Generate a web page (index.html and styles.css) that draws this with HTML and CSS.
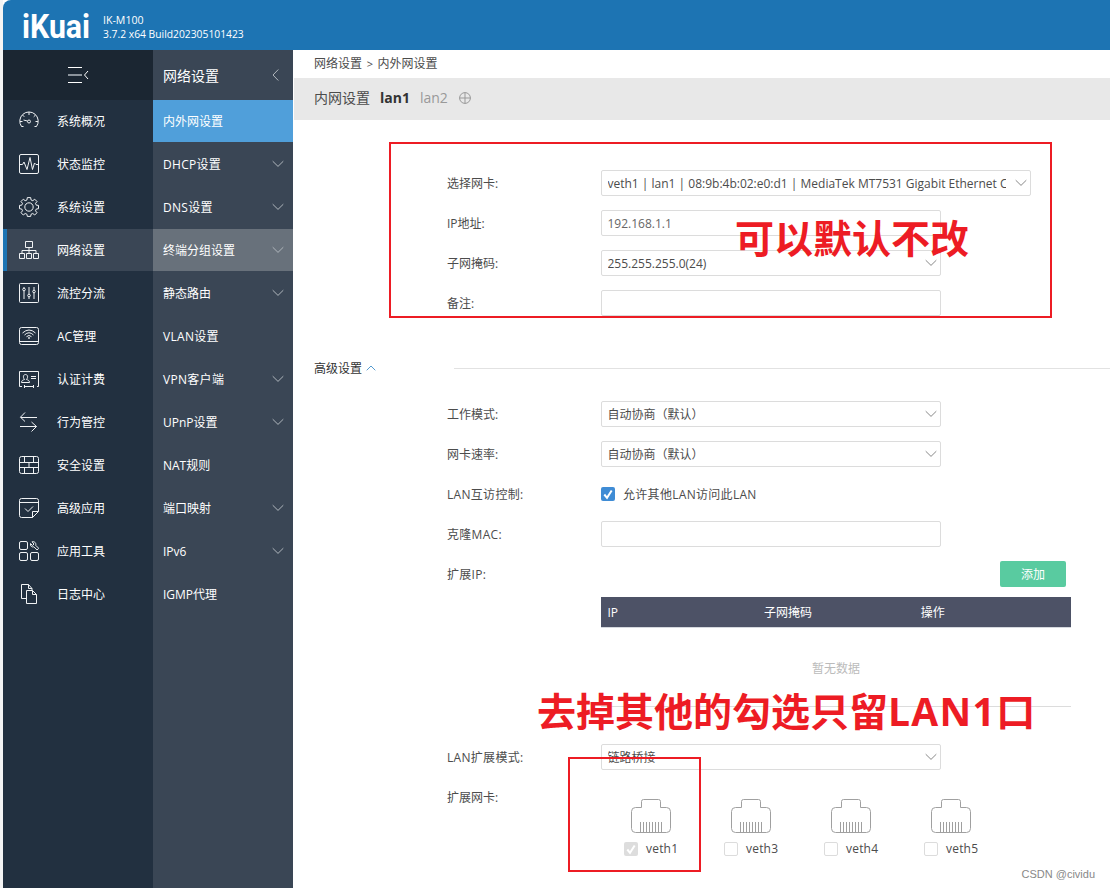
FILE: index.html
```html
<!DOCTYPE html>
<html lang="zh-CN">

<head>
    <meta charset="UTF-8">
    <meta name="viewport" content="width=device-width, initial-scale=1.0">
    <title>iKuai</title>
    <link rel="stylesheet" href="styles.css">
</head>

<body>
    <svg class="defs">
        <symbol id="down" viewBox="0 0 12 8">
            <path d="M.7 1.2 6 6.4l5.300-5.200" />
        </symbol>
        <symbol id="port" viewBox="0 0 40 34">
            <path d="M.5 12.500a4 4 0 0 1 4-4h6V2.500a2 2 0 0 1 2-2h15a2 2 0 0 1 2 2v6h6a4 4 0 0 1 4 4v17a4 4 0 0 1-4 4h-31a4 4 0 0 1-4-4z" />
            <path d="M9.500 23v10M12.500 23v10M15.500 23v10M18.500 23v10M21.500 23v10M24.500 23v10M27.500 23v10M30.500 23v10" />
        </symbol>
    </svg>

    <div class="app">
        <header class="header">
            <svg class="logo" width="70" height="28" viewBox="0 0 70 28">
                <text x="0" y="26" textLength="68" lengthAdjust="spacingAndGlyphs">iKuai</text>
            </svg>
            <div class="version">IK-M100<br><span>3.7.2 x64 Build202305101423</span></div>
        </header>

        <div class="main">
            <nav class="menu">
                <div class="menu-toggle">
                    <svg width="22" height="16" viewBox="0 0 22 16">
                        <path d="M0 .5h14M0 15.500h14" />
                        <path class="dim" d="M0 8h14" />
                        <path d="M20 4l-3.500 4 3.500 4" />
                    </svg>
                </div>
                <a class="menu-item">
                    <svg viewBox="0 0 20 20"><path d="M4.500 15.500H2.500A9.200 9.200 0 1 1 17.500 15.500H15.500M10 1v3M3.500 4l1.800 1.800M16.500 4l-1.800 1.800M1 10.500h2.500M16.500 10.500H19M4.500 9l4 1" /><circle cx="10" cy="10.500" r="1.500" /></svg>
                    系统概况
                </a>
                <a class="menu-item">
                    <svg viewBox="0 0 20 20"><rect x=".5" y=".5" width="19" height="19" rx="1.500" /><path d="M1 10.500h2.500l1.500-2.500 3 7.500 3-12 2.500 12 2-6.500 1.500 1.500H19" /></svg>
                    状态监控
                </a>
                <a class="menu-item">
                    <svg viewBox="0 0 20 20"><circle cx="10" cy="10" r="4.200" /><path d="M8.300.6h3.400l.3 2.300 1.800.8 1.900-1.500 2.300 2.300-1.500 1.900.8 1.800 2.200.2v3.300l-2.200.3-.8 1.800 1.500 1.900-2.300 2.300-1.900-1.500-1.800.8-.3 2.100H8.300L8 17.300l-1.800-.8L4.300 18 2 15.700l1.500-1.900-.8-1.800-2.200-.3V8.400l2.200-.2.8-1.800L2 4.500l2.300-2.300 1.900 1.500L8 2.900z" /></svg>
                    系统设置
                </a>
                <a class="menu-item active">
                    <svg viewBox="0 0 20 20"><path d="M6.500 1.500h7v6h-7zM.5 13.500h5v5h-5zM7.500 13.500h5v5h-5zM14.500 13.500h5v5h-5zM10 7.500v6M3 13.500v-3h14v3" /></svg>
                    网络设置
                </a>
                <a class="menu-item">
                    <svg viewBox="0 0 20 20"><rect x=".5" y=".5" width="19" height="19" rx="1" /><path d="M5 4v1M5 8v8M10 4v7M10 14v2M15 4v3M15 10v6" /><circle cx="5" cy="6.500" r="1.300" /><circle cx="10" cy="12.500" r="1.300" /><circle cx="15" cy="8.500" r="1.300" /></svg>
                    流控分流
                </a>
                <a class="menu-item">
                    <svg viewBox="0 0 20 20"><rect x=".5" y="1.500" width="19" height="17" rx="2" /><path d="M.5 15.500h19M3.500 7q6.500-6 13 0M5.500 9q4.500-4.500 9 0M7.500 10.700q2.500-2.500 5 0" /><circle cx="10" cy="12" r=".6" /></svg>
                    AC管理
                </a>
                <a class="menu-item">
                    <svg viewBox="0 0 20 20"><path d="M3 17.500H.5v-15h19v15H18M5.500 16v3M5.500 17.500H14M14.500 16v3M12 7.500h5M12 9.500h5M2.500 13.500c0-2 1.500-2.500 3-3-2-2.500-1-5 1-5s3 2.500 1 5c1.500.5 3 1 3 3z" /></svg>
                    认证计费
                </a>
                <a class="menu-item">
                    <svg viewBox="0 0 20 20"><path d="M6 .5 1.500 5.200 6 9.500M1.500 5.500H18M1 14.500h16.500M12.500 10l5 4.500-5 5" /></svg>
                    行为管控
                </a>
                <a class="menu-item">
                    <svg viewBox="0 0 20 20"><rect x=".5" y="1.500" width="19" height="17" rx="2" /><path d="M.5 7.500h19M.5 12.500h19M5.500 1.500v6M14.500 1.500v6M10 7.500v5M5.500 12.500v6M14.500 12.500v6" /></svg>
                    安全设置
                </a>
                <a class="menu-item">
                    <svg viewBox="0 0 20 20"><path d="M13.500 19.500h-11a2 2 0 0 1-2-2v-15a2 2 0 0 1 2-2h15a2 2 0 0 1 2 2v11zM.5 4.500h19M13.500 19.500v-6h6M6 10.500l3 3 5-5" /></svg>
                    高级应用
                </a>
                <a class="menu-item">
                    <svg viewBox="0 0 20 20"><rect x=".5" y=".5" width="8" height="8" rx="1.500" /><rect x=".5" y="11.500" width="8" height="8" rx="1.500" /><rect x="11.500" y="11.500" width="8" height="8" rx="1.500" /><path d="M13 .8c2-.8 4.500 1 3.700 3.500l3 3-1.600 1.700-3.200-3.200c-2 .8-4-1-3.400-3.300l2 2 1.500-1.500z" /></svg>
                    应用工具
                </a>
                <a class="menu-item">
                    <svg viewBox="0 0 20 20"><path d="M7 14.500H2.500V.5h7l3.500 4v2M9.500.5v4H13M7.500 6.500h6l4 4v9h-10zM13.500 6.500v4h4" /></svg>
                    日志中心
                </a>
            </nav>

            <nav class="submenu">
                <div class="submenu-title">网络设置
                    <svg width="7" height="12" viewBox="0 0 7 12"><path d="M6.300.5 1 6l5.300 5.500" /></svg>
                </div>
                <a class="sub-item current">内外网设置</a>
                <a class="sub-item mixed">DHCP设置<svg><use href="#down" /></svg></a>
                <a class="sub-item mixed">DNS设置<svg><use href="#down" /></svg></a>
                <a class="sub-item hover">终端分组设置<svg><use href="#down" /></svg></a>
                <a class="sub-item">静态路由<svg><use href="#down" /></svg></a>
                <a class="sub-item mixed">VLAN设置</a>
                <a class="sub-item mixed">VPN客户端<svg><use href="#down" /></svg></a>
                <a class="sub-item">UPnP设置<svg><use href="#down" /></svg></a>
                <a class="sub-item">NAT规则</a>
                <a class="sub-item">端口映射<svg><use href="#down" /></svg></a>
                <a class="sub-item">IPv6<svg><use href="#down" /></svg></a>
                <a class="sub-item">IGMP代理</a>
            </nav>

            <div class="content">
                <div class="crumb">网络设置 <i>&gt;</i> 内外网设置</div>
                <div class="tabs">
                    <span>内网设置</span>
                    <b>lan1</b>
                    <span class="tab-off">lan2</span>
                    <svg width="12" height="12" viewBox="0 0 12 12"><circle cx="6" cy="6" r="5.400" /><path d="M.5 6h11M6 .5v11" /></svg>
                </div>

                <div class="form form-basic">
                    <div class="row">
                        <label>选择网卡:</label>
                        <div class="field select wide"><span>veth1 | lan1 | 08:9b:4b:02:e0:d1 | MediaTek MT7531 Gigabit Ethernet Controller</span><svg><use href="#down" /></svg></div>
                    </div>
                    <div class="row">
                        <label>IP地址:</label>
                        <div class="field muted"><span>192.168.1.1</span></div>
                    </div>
                    <div class="row">
                        <label>子网掩码:</label>
                        <div class="field select"><span>255.255.255.0(24)</span><svg><use href="#down" /></svg></div>
                    </div>
                    <div class="row">
                        <label>备注:</label>
                        <div class="field"></div>
                    </div>
                </div>

                <div class="section">
                    <span>高级设置</span>
                    <svg width="10" height="6" viewBox="0 0 10 6"><path d="M.7 5.300 5 1l4.300 4.300" /></svg>
                    <hr>
                </div>

                <div class="form">
                    <div class="row">
                        <label>工作模式:</label>
                        <div class="field select"><span>自动协商（默认）</span><svg><use href="#down" /></svg></div>
                    </div>
                    <div class="row">
                        <label>网卡速率:</label>
                        <div class="field select"><span>自动协商（默认）</span><svg><use href="#down" /></svg></div>
                    </div>
                    <div class="row">
                        <label class="mixed">LAN互访控制:</label>
                        <i class="check checked"><svg viewBox="0 0 14 14"><path d="M3.300 7.500 6 10.800 10.700 3.500" /></svg></i>
                        <span class="check-text mixed">允许其他LAN访问此LAN</span>
                    </div>
                    <div class="row">
                        <label class="mixed">克隆MAC:</label>
                        <div class="field"></div>
                    </div>
                    <div class="row">
                        <label class="mixed">扩展IP:</label>
                        <button class="add">添加</button>
                    </div>
                </div>

                <div class="table">
                    <div class="thead"><span>IP</span><span>子网掩码</span><span>操作</span></div>
                    <div class="empty">暂无数据</div>
                </div>

                <div class="form form-ext">
                    <div class="row">
                        <label class="mixed">LAN扩展模式:</label>
                        <div class="field select"><span>链路桥接</span><svg><use href="#down" /></svg></div>
                    </div>
                    <div class="row ports-row">
                        <label>扩展网卡:</label>
                        <div class="ports">
                            <div class="port">
                                <svg class="jack"><use href="#port" /></svg>
                                <div><i class="check disabled"><svg viewBox="0 0 14 14"><path d="M3.300 7.500 6 10.800 10.700 3.500" /></svg></i><span>veth1</span></div>
                            </div>
                            <div class="port">
                                <svg class="jack"><use href="#port" /></svg>
                                <div><i class="check"></i><span>veth3</span></div>
                            </div>
                            <div class="port">
                                <svg class="jack"><use href="#port" /></svg>
                                <div><i class="check"></i><span>veth4</span></div>
                            </div>
                            <div class="port">
                                <svg class="jack"><use href="#port" /></svg>
                                <div><i class="check"></i><span>veth5</span></div>
                            </div>
                        </div>
                    </div>
                </div>
            </div>
        </div>
    </div>

    <!-- annotations -->
    <div class="mark mark-basic"></div>
    <div class="mark mark-port"></div>
    <div class="note note-basic">可以默认不改</div>
    <div class="note note-port">去掉其他的勾选只留<span>LAN1</span>口</div>
    <div class="watermark">CSDN @cividu</div>
</body>

</html>
```
FILE: styles.css
```css
* {
    box-sizing: border-box;
}

body {
    position: relative;
    margin: 0;
    height: 888px;
    overflow: hidden;
    background: #fff;
    color: #4c4c4c;
    font: 12px/18px "Open Sans", "Noto Sans CJK SC", sans-serif;
}

i {
    font-style: normal;
}

svg {
    flex: none;
    fill: none;
    stroke: currentColor;
}

.defs {
    display: none;
}

.mixed {
    letter-spacing: .3px;
}

.app {
    display: flex;
    flex-direction: column;
    height: 888px;
    padding-left: 3px;
    background: linear-gradient(to right, #f4f4f4 3px, #fff 3px);
}

.header {
    display: flex;
    height: 50px;
    padding: 12px 0 0 19px;
    border-top-left-radius: 8px;
    background: #1d74b3;
    color: #fff;
}

.logo {
    overflow: visible;
}

.logo text {
    font: bold 33px "Roboto", sans-serif;
    fill: #fff;
    stroke: none;
}

.version {
    margin-left: 11px;
    padding-top: 1px;
    font-size: 10.6px;
    line-height: 14px;
}

.version span {
    font-size: 10.3px;
}

.main {
    display: flex;
    flex: 1;
}

/* left menu */
.menu {
    width: 150px;
    background: #223040;
    color: #fff;
}

.menu-toggle {
    height: 50px;
    padding: 17px 0 0 65px;
    background: #1b2632;
}

.menu-toggle .dim {
    stroke: #8b939b;
    stroke-width: 2;
}

.menu-item {
    display: flex;
    align-items: center;
    gap: 18px;
    height: 42px;
    margin-bottom: 1px;
    padding: 2px 0 0 16px;
}

.menu-item svg {
    width: 20px;
    height: 20px;
    margin-bottom: 2px;
    stroke: #f0f2f4;
}

.menu-item.active {
    padding-left: 12px;
    border-left: 4px solid #1d74b3;
    background: #3a4655;
}

.submenu {
    width: 140px;
    background: #3a4655;
    color: #fff;
}

.submenu-title,
.sub-item {
    display: flex;
    align-items: center;
    justify-content: space-between;
    height: 42px;
    margin-bottom: 1px;
    padding: 2px 9px 0 10px;
}

.submenu-title {
    height: 50px;
    margin: 0;
    padding-right: 14px;
    font-size: 14px;
}

.submenu svg {
    margin-bottom: 2px;
    stroke: #b0b6bc;
}

.sub-item svg,
.select svg {
    width: 12px;
    height: 8px;
}

.sub-item.current {
    background: #509fda;
}

.sub-item.hover {
    background: #68717b;
}

/* content */
.content {
    flex: 1;
    min-width: 0;
    overflow: hidden;
}

.crumb {
    height: 28px;
    padding: 5px 0 0 21px;
}

.crumb i {
    margin: 0 1.5px;
    font-size: 11px;
}

.tabs {
    display: flex;
    align-items: center;
    gap: 10px;
    height: 42px;
    margin-left: 1px;
    padding: 0 0 2px 20px;
    background: #e8e8e8;
    font-size: 14px;
}

.tabs b {
    color: #333;
}

.tab-off,
.tabs svg {
    color: #999;
}

.tabs svg {
    margin-left: 1px;
}

.form {
    padding-left: 154px;
}

.form-basic {
    padding-top: 50px;
}

.row {
    display: flex;
    align-items: center;
    height: 26px;
    margin-bottom: 14px;
}

.row label {
    width: 154px;
    flex: none;
    padding-top: 2px;
}

.field {
    display: flex;
    align-items: center;
    width: 340px;
    height: 26px;
    padding: 0 3px 0 5.500px;
    border: 1px solid #dcdcdc;
    border-radius: 2px;
}

.field.wide {
    width: 430px;
}

.field.muted {
    color: #666;
}

.field span {
    flex: 1;
    padding-top: 2px;
    overflow: hidden;
    white-space: nowrap;
}

.select svg {
    margin-left: 9px;
    stroke: #888;
}

.section {
    display: flex;
    align-items: center;
    height: 18px;
    margin: 43px 0 24px;
    padding-left: 21px;
    color: #333;
}

.section span {
    padding-top: 2px;
}

.section svg {
    margin-left: 4px;
    color: #559bd0;
}

.section hr {
    flex: 1;
    margin: 0 0 0 78px;
    border: 0;
    border-top: 1px solid #e2e2e2;
}

.check {
    display: block;
    flex: none;
    width: 14px;
    height: 14px;
    border: 1px solid #dcdcdc;
    border-radius: 2px;
}

.check svg {
    display: block;
    width: 14px;
    height: 14px;
    stroke: #fff;
    stroke-width: 2;
}

.check.checked {
    border: 0;
    background: #3f8cd5;
}

.check.disabled {
    border: 0;
    background: #ddd;
}

.check-text {
    margin-left: 8px;
    padding-top: 2px;
}

.add {
    width: 66px;
    height: 26px;
    margin-left: 399px;
    padding: 2px 0 0;
    border: 0;
    border-radius: 2px;
    background: #59cba0;
    color: #fff;
    font: inherit;
}

.table {
    width: 470px;
    margin: -4px 0 0 308px;
    border-bottom: 1px solid #dcdcdc;
}

.thead {
    display: flex;
    height: 31px;
    border-bottom: 1px solid #d5d8de;
    background: #4d5266;
    color: #fff;
    line-height: 31px;
}

.thead span {
    width: 156.600px;
    padding-left: 6.500px;
}

.empty {
    height: 78px;
    padding-top: 32px;
    color: #bbb;
    text-align: center;
}

.form-ext {
    padding-top: 37px;
}

.ports-row {
    align-items: flex-start;
}

.ports-row label {
    padding-top: 5px;
}

.ports {
    display: flex;
    padding: 15px 0 0 23px;
}

.port {
    width: 100px;
    flex: none;
}

.port div {
    display: flex;
    align-items: center;
    gap: 8px;
    margin-top: 7px;
}

.port span {
    letter-spacing: .2px;
}

.jack {
    display: block;
    width: 40px;
    height: 34px;
    margin-left: 7px;
    color: #a0a0a0;
}

/* annotations drawn over the page */
.mark {
    position: absolute;
    border: 2px solid #ed1c24;
}

.mark-basic {
    left: 389px;
    top: 142px;
    width: 663px;
    height: 176px;
}

.mark-port {
    left: 568px;
    top: 757px;
    width: 133px;
    height: 115px;
}

.note {
    position: absolute;
    color: #ed1c24;
    font: bold 39px/48px "Noto Sans CJK SC", sans-serif;
    white-space: nowrap;
}

.note span {
    font-family: "Open Sans", sans-serif;
    letter-spacing: 1.3px;
}

.note-basic {
    left: 735px;
    top: 212px;
}

.note-port {
    left: 537px;
    top: 685px;
}

.watermark {
    position: absolute;
    right: 15px;
    bottom: 5px;
    color: #888;
    font: 11px/18px "Liberation Sans", sans-serif;
}
```
